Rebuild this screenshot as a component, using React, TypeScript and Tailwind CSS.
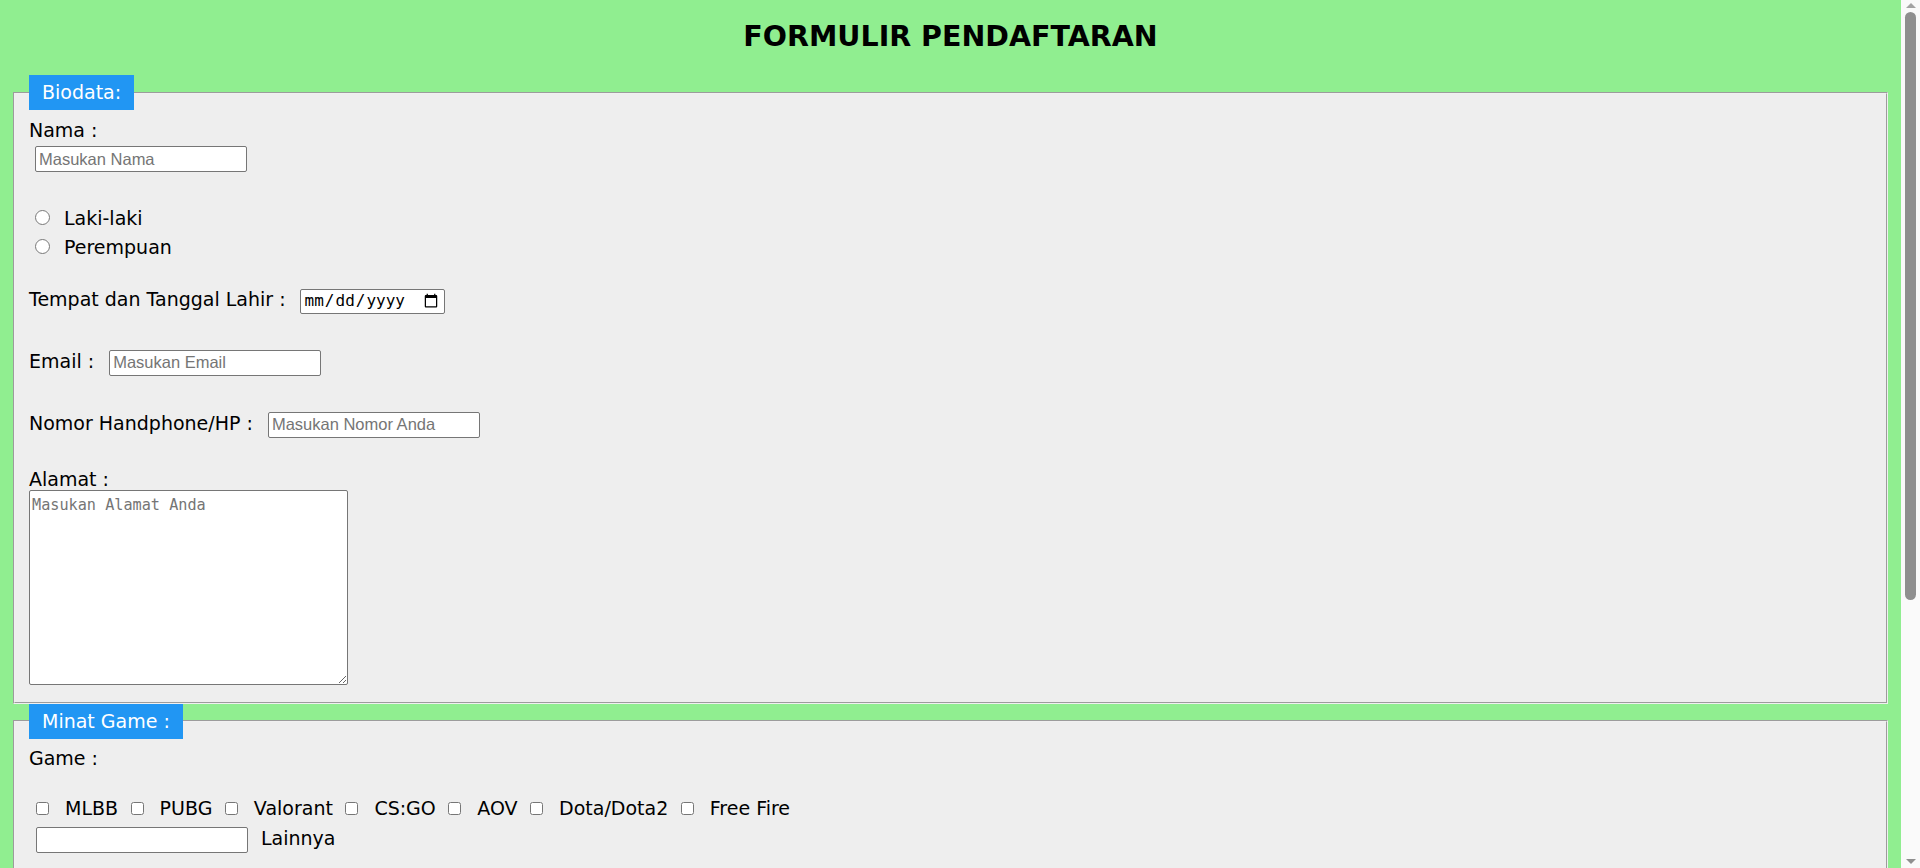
import React from 'react';

const games = ['MLBB', 'PUBG', 'Valorant', 'CS:GO', 'AOV', 'Dota/Dota2', 'Free Fire'];

const fieldCls =
  "h-[26px] w-[212px] rounded-[2px] border border-[#767676] bg-white px-[3px] font-['Liberation_Sans',Arial,sans-serif] text-[16.5px] text-black placeholder:text-[#757575] outline-none";

const areaCls =
  "block h-[195px] w-[319px] rounded-[2px] border border-[#767676] bg-white px-[2px] py-[3px] font-['DejaVu_Sans_Mono',monospace] text-[15.2px] text-black placeholder:text-[#757575] outline-none";

type SectionProps = { title: string; children: React.ReactNode };

const Section: React.FC<SectionProps> = ({ title, children }) => (
  <fieldset className="border-2 border-[#f0f0f0] [--tw-border-style:groove] [border-style:groove] bg-[#eeeeee] px-[14px] pb-[17px]">
    <legend className="bg-[#2196f3] px-[13px] py-[7px] leading-[21px] text-white">{title}</legend>
    {children}
  </fieldset>
);

// fake browser scrollbar, sits over the right edge of the page
const ScrollBar: React.FC = () => (
  <div className="fixed right-0 top-0 flex h-screen w-[19px] flex-col items-center bg-[#fafafa]">
    <svg width="12" height="7" viewBox="0 0 12 7" className="mt-[2px]">
      <path d="M6 1 L11 6 L1 6 Z" fill="#a3a3a3" />
    </svg>
    <div className="mt-[3px] h-[588px] w-[11px] rounded-full bg-[#8f8f8f]" />
    <div className="flex-1" />
    <svg width="12" height="7" viewBox="0 0 12 7" className="mb-[3px]">
      <path d="M1 1 L11 1 L6 6 Z" fill="#8f8f8f" />
    </svg>
  </div>
);

const App: React.FC = () => {
  return (
    <div className="min-h-screen bg-[#90ee90] font-['DejaVu_Sans',sans-serif] text-[19px] leading-[22px] text-black">
      <div className="mr-[19px] px-[13px] pb-[40px]">
        <h1 className="pt-[20px] mb-[22px] text-center text-[28.5px] leading-[33px] font-bold">FORMULIR PENDAFTARAN</h1>

        <form>
          <Section title="Biodata:">
            <label className="mt-[9px] block">Nama :</label>
            <input type="text" placeholder="Masukan Nama" className={`${fieldCls} mt-[5px] ml-[6px] block`} />

            <label className="mt-[35px] flex items-baseline">
              <input type="radio" name="jk" className="ml-[6px] mr-[14px] mb-[2px] h-[15px] w-[15px]" />
              Laki-laki
            </label>
            <label className="mt-[7px] flex items-baseline">
              <input type="radio" name="jk" className="ml-[6px] mr-[14px] mb-[2px] h-[15px] w-[15px]" />
              Perempuan
            </label>

            <div className="mt-[30px] flex items-baseline">
              <span>Tempat dan Tanggal Lahir :</span>
              <input
                type="date"
                className="ml-[14px] h-[25px] w-[145px] rounded-[2px] border border-[#767676] bg-white px-[3px] font-['DejaVu_Sans_Mono',monospace] text-[16px] text-black outline-none"
              />
            </div>

            <div className="mt-[36px] flex items-baseline">
              <span>Email :</span>
              <input type="email" placeholder="Masukan Email" className={`${fieldCls} ml-[15px]`} />
            </div>

            <div className="mt-[36px] flex items-baseline">
              <span>Nomor Handphone/HP :</span>
              <input type="tel" placeholder="Masukan Nomor Anda" className={`${fieldCls} ml-[15px]`} />
            </div>

            <label className="mt-[30px] block">Alamat :</label>
            <textarea placeholder="Masukan Alamat Anda" className={areaCls} />
          </Section>

          <Section title="Minat Game :">
            <div className="mt-[8px]">Game :</div>

            <div className="mt-[28px] flex flex-wrap items-baseline gap-x-[5.5px]">
              {games.map((g) => (
                <label key={g} className="flex items-baseline">
                  <input type="checkbox" className="ml-[7px] mr-[16px] mb-[2px] h-[13px] w-[13px]" />
                  {g}
                </label>
              ))}
            </div>

            <div className="mt-[8px] flex items-baseline">
              <input type="text" className={`${fieldCls} ml-[7px] w-[211px]`} />
              <span className="ml-[13px]">Lainnya</span>
            </div>

            <label className="mt-[44px] block">Alasan Bergabung :</label>
            <textarea placeholder="Tuliskan alasan anda" className={areaCls} />
          </Section>

          <Section title="Akun :">
            <label className="mt-[9px] block">Username :</label>
            <input type="text" placeholder="Masukan Username" className={`${fieldCls} mt-[5px] ml-[6px] block`} />

            <label className="mt-[30px] block">Password :</label>
            <input type="password" placeholder="Masukan Password" className={`${fieldCls} mt-[5px] ml-[6px] block`} />

            <div className="mt-[30px] flex gap-[10px]">
              <button type="submit" className="rounded-[2px] bg-[#2196f3] px-[18px] py-[6px] text-white">Kirim</button>
              <button type="reset" className="rounded-[2px] bg-[#f44336] px-[18px] py-[6px] text-white">Reset</button>
            </div>
          </Section>
        </form>
      </div>
      <ScrollBar />
    </div>
  );
};

export default App;
